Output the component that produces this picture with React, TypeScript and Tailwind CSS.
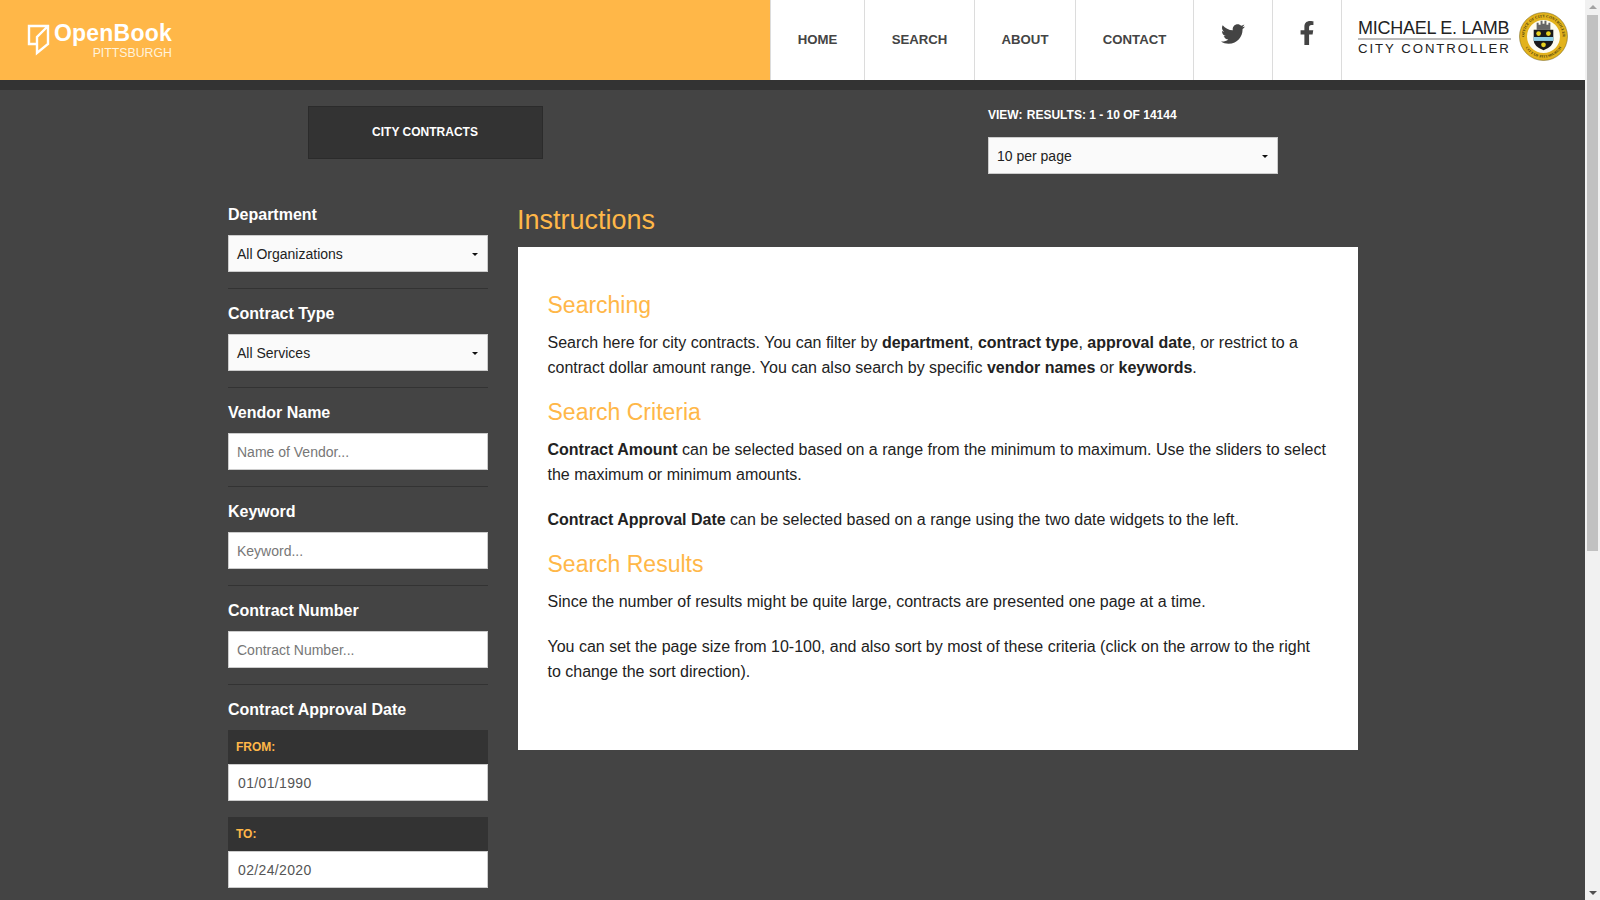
import { FaTwitter, FaFacebookF } from "react-icons/fa";

const NAV_LINKS = [
  { label: "HOME", width: "w-[94px]" },
  { label: "SEARCH", width: "w-[110px]" },
  { label: "ABOUT", width: "w-[101px]" },
  { label: "CONTACT", width: "w-[118px]" },
];

function Logo() {
  return (
    <div className="flex items-start ml-[27px] mt-[21px]">
      <svg width="24" height="32" viewBox="0 0 24 32" className="mt-[3px]" fill="none" stroke="#fff" strokeWidth="2.4">
        <path d="M9 20 H2 V2 H21 V20 L10 29 V13 L21 2" />
      </svg>
      <div className="ml-[3px] text-white flex flex-col items-end">
        <span className="text-[23px] leading-[24px] font-bold tracking-[0.2px]">OpenBook</span>
        <span className="text-[12.3px] leading-[14px] mt-[1px] text-[#fff3dc]">PITTSBURGH</span>
      </div>
    </div>
  );
}

function Seal() {
  return (
    <svg width="49" height="49" viewBox="0 0 50 50">
      <defs>
        <path id="sealTop" d="M5.5 25 A19.5 19.5 0 0 1 44.5 25" />
        <path id="sealBottom" d="M3.5 25 A21.5 21.5 0 0 0 46.5 25" />
      </defs>
      <circle cx="25" cy="25" r="24.5" fill="#e2b21c" stroke="#6b5a12" strokeWidth="0.5" />
      <text fontSize="4" fontWeight="700" fill="#4a3d0c" fontFamily="Liberation Serif, serif" textAnchor="middle">
        <textPath href="#sealTop" startOffset="50%">OFFICE OF CITY CONTROLLER</textPath>
      </text>
      <text fontSize="4" fontWeight="700" fill="#4a3d0c" fontFamily="Liberation Serif, serif" textAnchor="middle">
        <textPath href="#sealBottom" startOffset="50%">CITY OF PITTSBURGH</textPath>
      </text>
      <circle cx="25" cy="25" r="18" fill="#fdfcf0" stroke="#e2b21c" strokeWidth="2.4" />
      <path d="M18 18 V11 H20 V13 H22 V9 H24 V12 H26 V9 H28 V13 H30 V11 H32 V18 Z" fill="#666" />
      <path d="M15 18 H35 V29 Q35 35 25 39 Q15 35 15 29 Z" fill="#1a1a1a" />
      <circle cx="20" cy="22" r="2.4" fill="#e8d21e" />
      <circle cx="30" cy="22" r="2.4" fill="#e8d21e" />
      <circle cx="25" cy="33.5" r="2.4" fill="#e8d21e" />
      <rect x="15" y="25.5" width="20" height="4" fill="#8fd0e8" />
    </svg>
  );
}

function Header() {
  return (
    <header className="flex h-20 bg-[#ffb748]">
      <div className="w-[770px]">
        <Logo />
      </div>
      <nav className="flex-1 flex bg-white border-l border-[#dcdcdc]">
        {NAV_LINKS.map((l) => (
          <a key={l.label} className={`${l.width} flex items-center justify-center border-r border-[#dcdcdc] text-[13.2px] font-bold text-[#444]`}>
            {l.label}
          </a>
        ))}
        <a className="w-[79px] flex items-start justify-center pt-[22px] border-r border-[#dcdcdc] text-[#444]">
          <FaTwitter size={24} />
        </a>
        <a className="w-[69px] flex items-start justify-center pt-[21px] border-r border-[#dcdcdc] text-[#444]">
          <FaFacebookF size={24} />
        </a>
        <div className="flex-1 flex items-start pl-[16px] pt-[12px]">
          <div className="w-[153px] mt-[6px] text-[#222]">
            <div className="text-[18px] leading-[20px] tracking-[-0.27px] border-b-2 border-[#bbb] whitespace-nowrap">MICHAEL E. LAMB</div>
            <div className="text-[13.2px] leading-[17px] tracking-[1.95px] whitespace-nowrap">CITY CONTROLLER</div>
          </div>
          <div className="ml-[8px]">
            <Seal />
          </div>
        </div>
      </nav>
    </header>
  );
}

function Caret() {
  return <span className="w-0 h-0 border-x-[3px] border-x-transparent border-t-[3px] border-t-[#111]" />;
}

function SelectBox({ value, className }: { value: string; className: string }) {
  return (
    <div className={`${className} h-[37px] flex items-center justify-between pl-[8px] pr-[9px] pt-[1px] bg-[#fafafa] border border-[#ccc] text-[14px] text-[#222]`}>
      <span>{value}</span>
      <Caret />
    </div>
  );
}

function TextBox({ placeholder }: { placeholder: string }) {
  return (
    <div className="w-[260px] h-[37px] flex items-center pl-[8px] pt-[1px] bg-white border border-[#ccc] text-[14px] text-[#777]">
      {placeholder}
    </div>
  );
}

function FilterGroup({ label, children }: { label: string; children: React.ReactNode }) {
  return (
    <div className="border-b border-[#333] pb-[16px] mb-[15px]">
      <h4 className="text-[16px] leading-[20px] font-bold text-white mb-[10px]">{label}</h4>
      {children}
    </div>
  );
}

function DateBox({ label, value }: { label: string; value: string }) {
  return (
    <div className="mb-[16px]">
      <div className="h-[34px] bg-[#333] flex items-center pl-[8px] text-[12px] font-bold text-[#ffb748]">{label}</div>
      <div className="h-[37px] flex items-center pl-[9px] pt-[1px] bg-white border border-[#ccc] text-[14px] text-[#555] tracking-[0.35px]">{value}</div>
    </div>
  );
}

function Sidebar() {
  return (
    <aside className="w-[260px] shrink-0">
      <FilterGroup label="Department">
        <SelectBox value="All Organizations" className="w-[260px]" />
      </FilterGroup>
      <FilterGroup label="Contract Type">
        <SelectBox value="All Services" className="w-[260px]" />
      </FilterGroup>
      <FilterGroup label="Vendor Name">
        <TextBox placeholder="Name of Vendor..." />
      </FilterGroup>
      <FilterGroup label="Keyword">
        <TextBox placeholder="Keyword..." />
      </FilterGroup>
      <FilterGroup label="Contract Number">
        <TextBox placeholder="Contract Number..." />
      </FilterGroup>
      <h4 className="text-[16px] leading-[20px] font-bold text-white mb-[10px]">Contract Approval Date</h4>
      <DateBox label="FROM:" value="01/01/1990" />
      <DateBox label="TO:" value="02/24/2020" />
    </aside>
  );
}

function Instructions() {
  return (
    <main className="w-[840px] ml-[30px]">
      <h2 className="text-[27px] leading-[30px] -ml-[1px] text-[#ffb748] mb-[12px]">Instructions</h2>
      <section className="h-[503px] bg-white pl-[29.5px] pr-[32px] pt-[45px] text-[16px] leading-[25px] text-[#222]">
        <h3 className="text-[23px] leading-[26px] text-[#ffb748] mb-[12px]">Searching</h3>
        <p>
          Search here for city contracts. You can filter by <b>department</b>, <b>contract type</b>, <b>approval date</b>, or restrict to a contract dollar amount range. You can also search by specific <b>vendor names</b> or <b>keywords</b>.
        </p>
        <h3 className="text-[23px] leading-[26px] text-[#ffb748] mt-[19px] mb-[12px]">Search Criteria</h3>
        <p className="mb-[20px]">
          <b>Contract Amount</b> can be selected based on a range from the minimum to maximum. Use the sliders to select the maximum or minimum amounts.
        </p>
        <p>
          <b>Contract Approval Date</b> can be selected based on a range using the two date widgets to the left.
        </p>
        <h3 className="text-[23px] leading-[26px] text-[#ffb748] mt-[19px] mb-[12px]">Search Results</h3>
        <p className="mb-[20px]">Since the number of results might be quite large, contracts are presented one page at a time.</p>
        <p>
          You can set the page size from 10-100, and also sort by most of these criteria (click on the arrow to the right to change the sort direction).
        </p>
      </section>
    </main>
  );
}

// the screenshot shows the browser's own scrollbar, headless doesn't draw one
function Scrollbar() {
  return (
    <div className="fixed top-0 right-0 w-[15px] h-[900px] bg-[#f1f1f1]">
      <span className="absolute top-[5px] left-[4px] w-0 h-0 border-x-[4px] border-x-transparent border-b-[4px] border-b-[#a3a3a3]" />
      <div className="absolute top-[15px] left-[2px] w-[11px] h-[536px] bg-[#c1c1c1]" />
      <span className="absolute bottom-[5px] left-[4px] w-0 h-0 border-x-[4px] border-x-transparent border-t-[4px] border-t-[#505050]" />
    </div>
  );
}

export default function App() {
  return (
    <div className="w-[1585px] min-h-[1458px] bg-[#444] font-['Liberation_Sans',Arial,sans-serif]">
      <Header />
      <div className="h-[10px] bg-[#333]" />
      <div className="w-[1130px] ml-[228px]">
        <div className="flex h-[107px] pt-[16px]">
          <div className="ml-[80px] w-[235px] h-[53px] bg-[#333] border border-[#2b2b2b] flex items-center justify-center text-[12px] font-bold text-white pb-[1px] pr-[1px]">
            CITY CONTRACTS
          </div>
          <div className="ml-[445px]">
            <div className="text-[12px] leading-[18px] font-bold text-white mb-[13px] whitespace-nowrap">
              VIEW: <span className="ml-[1px]">RESULTS: 1 - 10 OF 14144</span>
            </div>
            <SelectBox value="10 per page" className="w-[290px]" />
          </div>
        </div>
        <div className="flex mt-[8px]">
          <Sidebar />
          <Instructions />
        </div>
      </div>
      <Scrollbar />
    </div>
  );
}
